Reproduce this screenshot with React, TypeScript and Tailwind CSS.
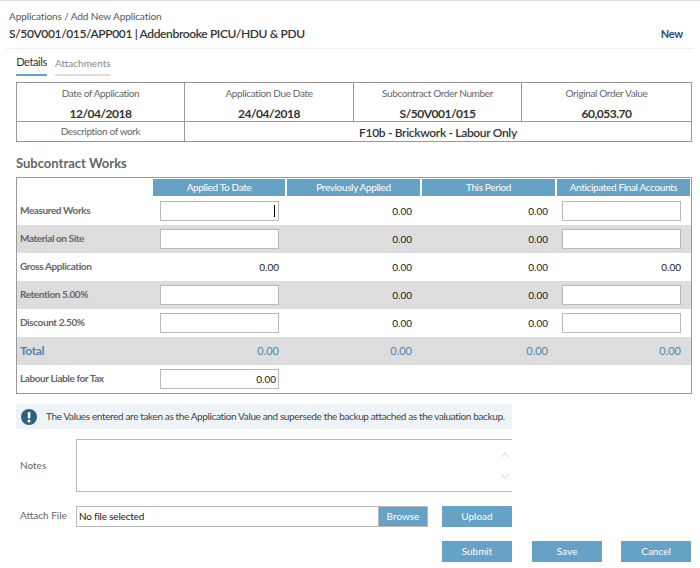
import React from "react";

const Btn = ({ children, className = "" }: { children: React.ReactNode; className?: string }) => (
  <div className={`w-[70px] h-[21px] bg-[#66a2c6] text-white text-[10px] flex items-center justify-center ${className}`}>{children}</div>
);

const Input = ({ value, caret, className = "" }: { value?: string; caret?: boolean; className?: string }) => (
  <div className={`w-[119px] h-[20px] bg-white border border-[#b9b9b9] flex items-center justify-end pr-[2px] text-[10px] text-[#222] ${className}`}>
    {value}
    {caret && <span className="w-px h-[12px] bg-black mr-[1px]" />}
  </div>
);

const Val = ({ v, className = "" }: { v: string; className?: string }) => (
  <div className={`flex items-center justify-end text-[10px] text-[#222] ${className}`}>{v}</div>
);

const Info = ({ label, value }: { label: string; value: string }) => (
  <div className="border-r border-[#999] last:border-r-0 flex flex-col items-center">
    <div className="text-[10px] tracking-[-0.36px] text-[#666] mt-[3px] h-[15px] leading-[15px]">{label}</div>
    <div className="text-[12px] font-bold tracking-[-0.5px] text-[#333] mt-[6px] leading-[14px]">{value}</div>
  </div>
);

const rows = [
  { label: "Measured Works", a: "input", caret: true, d: "input" },
  { label: "Material on Site", a: "input", d: "input", shade: true },
  { label: "Gross Application", a: "0.00", d: "0.00" },
  { label: "Retention 5.00%", a: "input", d: "input", shade: true },
  { label: "Discount 2.50%", a: "input", d: "input" },
];

const cols = "grid grid-cols-[136px_134px_135px_135px_134px]";
const rowLabel = "pl-[3px] text-[10px] font-bold tracking-[-0.4px] text-[#666] flex items-center pb-[1px]";

export default function App() {
  return (
    <div className="w-[700px] h-[568px] bg-white overflow-hidden text-[#444] font-['Lato',sans-serif]">
      <div className="h-px bg-[#ddd]" />
      <div className="h-[48px] mx-[6px] border-b border-[#eee] px-[3px] relative">
        <div className="text-[10px] tracking-[-0.1px] text-[#555] pt-[9px] leading-[13px]">Applications / Add New Application</div>
        <div className="flex justify-between items-center mt-[3px] pr-[8px] leading-[16px]">
          <div className="text-[12px] font-semibold tracking-[-0.37px] text-[#333]">S/50V001/015/APP001 | Addenbrooke PICU/HDU &amp; PDU</div>
          <div className="text-[11px] font-bold tracking-[-0.2px] text-[#2c4a73]">New</div>
        </div>
      </div>

      <div className="pl-[16px] pr-[8px]">
        <div className="flex gap-[8px] h-[27px] text-[11px]">
          <div className="w-[31px] border-b-2 border-[#66a2c6] text-[#333] tracking-[-0.4px] pt-[6px] h-[27px] text-center leading-[14px]">Details</div>
          <div className="w-[55px] border-b-2 border-[#ddd] text-[#888] text-[10px] pt-[7px] h-[27px] text-center leading-[14px]">Attachments</div>
        </div>

        <div className="mt-[6px] border border-[#999] w-[676px]">
          <div className="grid grid-cols-[168px_169px_168px_169px] h-[39px] border-b border-[#999]">
            <Info label="Date of Application" value="12/04/2018" />
            <Info label="Application Due Date" value="24/04/2018" />
            <Info label="Subcontract Order Number" value="S/50V001/015" />
            <Info label="Original Order Value" value="60,053.70" />
          </div>
          <div className="grid grid-cols-[168px_1fr] grid-rows-[19px] h-[19px]">
            <div className="border-r border-[#999] text-[10px] tracking-[-0.37px] text-[#666] text-center leading-[19px]">Description of work</div>
            <div className="text-center text-[12px] font-semibold tracking-[-0.33px] text-[#333] leading-[18px] pt-[2px]">F10b - Brickwork - Labour Only</div>
          </div>
        </div>

        <div className="text-[13px] font-bold text-[#666] mt-[12px] leading-[18px]">Subcontract Works</div>

        <div className="mt-[5px] border border-[#999] w-[676px] h-[217px]">
          <div className={`${cols} h-[19px] pt-px`}>
            <div />
            {["Applied To Date", "Previously Applied", "This Period", "Anticipated Final Accounts"].map((h, i) => (
              <div key={h} className={`bg-[#66a2c6] text-white text-[10px] tracking-[-0.35px] flex items-center justify-center ${i === 3 ? "mr-px" : "mr-[2px]"} h-[17px]`}>{h}</div>
            ))}
          </div>
          {rows.map((r) => (
            <div key={r.label} className={`${cols} h-[28px] ${r.shade ? "bg-[#dddddd]" : ""}`}>
              <div className={rowLabel}>{r.label}</div>
              <div className="pl-[7px] flex items-center">
                {r.a === "input" ? <Input caret={r.caret} /> : <Val v={r.a} className="w-[119px]" />}
              </div>
              <Val v="0.00" className="pr-[10px]" />
              <Val v="0.00" className="pr-[9px]" />
              <div className="pl-[5px] flex items-center">
                {r.d === "input" ? <Input /> : <Val v={r.d} className="w-[119px]" />}
              </div>
            </div>
          ))}
          <div className={`${cols} h-[28px] bg-[#dddddd] text-[#4f86ad] text-[11px]`}>
            <div className="pl-[3px] text-[12px] tracking-[-0.4px] font-bold flex items-center">Total</div>
            <div className="pl-[7px] flex items-center"><div className="w-[119px] text-right">0.00</div></div>
            <div className="pr-[10px] flex items-center justify-end">0.00</div>
            <div className="pr-[9px] flex items-center justify-end">0.00</div>
            <div className="pl-[5px] flex items-center"><div className="w-[119px] text-right">0.00</div></div>
          </div>
          <div className={`${cols} h-[28px]`}>
            <div className={rowLabel}>Labour Liable for Tax</div>
            <div className="pl-[7px] flex items-center"><Input value="0.00" /></div>
          </div>
        </div>

        <div className="mt-[10px] w-[496px] h-[25px] bg-[#edf3f7] flex items-center pl-[5px]">
          <svg width="16" height="16" viewBox="0 0 16 16" className="shrink-0">
            <circle cx="8" cy="8" r="8" fill="#2f5f80" />
            <rect x="6.8" y="3" width="2.6" height="6.6" rx="0.8" fill="#fff" />
            <circle cx="8" cy="12" r="1.5" fill="#fff" />
          </svg>
          <div className="ml-[9px] text-[10px] tracking-[-0.37px] whitespace-nowrap text-[#444]">The Values entered are taken as the Application Value and supersede the backup attached as the valuation backup.</div>
        </div>

        <div className="flex mt-[10px] w-[496px]">
          <div className="w-[60px] pl-[4px] text-[10px] text-[#666] flex items-center">Notes</div>
          <div className="flex-1 h-[53px] border border-r-0 border-[#b9b9b9] flex flex-col items-end justify-center gap-[13px] pr-[1px]">
            <svg width="12" height="8" viewBox="0 0 12 8" fill="none" stroke="#e6e6e6" strokeWidth="1.6"><path d="M2 6l4-4 4 4" /></svg>
            <svg width="12" height="8" viewBox="0 0 12 8" fill="none" stroke="#e6e6e6" strokeWidth="1.6"><path d="M2 2l4 4 4-4" /></svg>
          </div>
        </div>

        <div className="flex mt-[14px] w-[496px] h-[21px]">
          <div className="w-[60px] pl-[4px] text-[10px] text-[#666] leading-[18px]">Attach File</div>
          <div className="w-[352px] flex border border-[#b9b9b9]">
            <div className="flex-1 pl-[2px] text-[10px] tracking-[-0.2px] text-[#222] flex items-center">No file selected</div>
            <div className="w-[49px] bg-[#66a2c6] border-l border-[#b9b9b9] text-white text-[10px] flex items-center justify-center">Browse</div>
          </div>
          <Btn className="ml-auto">Upload</Btn>
        </div>

        <div className="flex mt-[14px] w-[675px]">
          <Btn className="ml-[426px]">Submit</Btn>
          <Btn className="ml-[20px]">Save</Btn>
          <Btn className="ml-[19px]">Cancel</Btn>
        </div>
      </div>
    </div>
  );
}
